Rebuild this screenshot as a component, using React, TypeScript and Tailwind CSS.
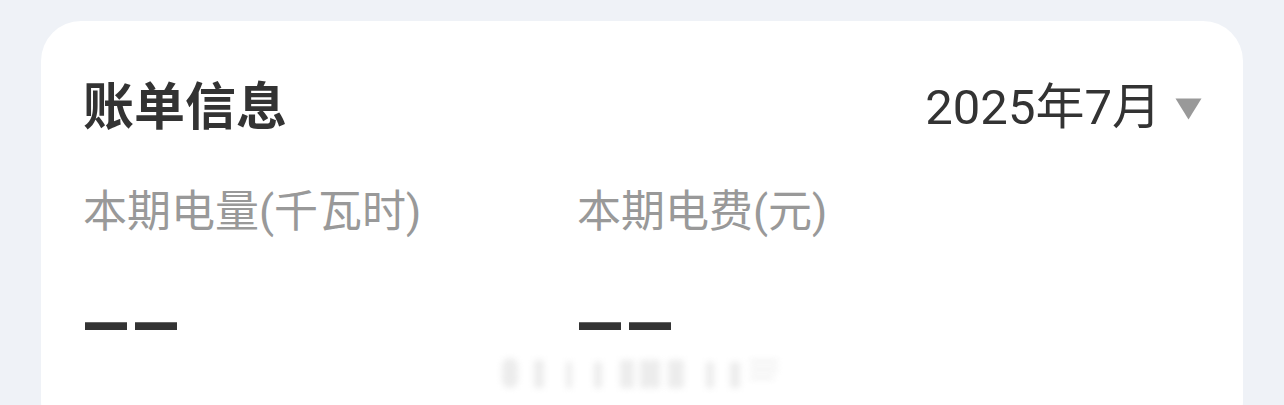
const FONT = "font-['Roboto','Noto_Sans_CJK_SC',sans-serif]"

const stats = [
  { label: '本期电量(千瓦时)', value: '——' },
  { label: '本期电费(元)', value: '——' },
]

function Caret() {
  return (
    <svg width="27" height="22" viewBox="0 0 27 22" className="ml-[14px] mt-[4px]">
      <path d="M0.5 0.5 H26.5 L13.5 21.5 Z" fill="#999999" />
    </svg>
  )
}

// faint smudge that sits under the value row
function Smudge() {
  return (
    <svg
      width="300"
      height="48"
      viewBox="0 0 300 48"
      className="pointer-events-none absolute left-[494px] top-[348px]"
    >
      <defs>
        <filter id="soft" x="-20%" y="-50%" width="140%" height="200%">
          <feGaussianBlur stdDeviation="3.4" />
        </filter>
      </defs>
      <g filter="url(#soft)" fill="#d0d0d0" opacity="0.4">
        <rect x="8" y="10" width="16" height="30" rx="8" />
        <rect x="40" y="12" width="10" height="28" />
        <rect x="72" y="14" width="6" height="26" />
        <rect x="100" y="14" width="8" height="26" />
        <rect x="126" y="12" width="14" height="28" />
        <rect x="146" y="12" width="20" height="28" />
        <rect x="174" y="12" width="16" height="28" />
        <rect x="212" y="14" width="8" height="26" />
        <rect x="236" y="14" width="10" height="26" />
        <rect x="256" y="12" width="28" height="3" />
        <rect x="256" y="20" width="28" height="3" />
        <rect x="256" y="28" width="24" height="3" />
      </g>
    </svg>
  )
}

export default function App() {
  return (
    <main className={`relative h-[405px] w-[1284px] overflow-hidden bg-[#eff2f7] px-[41px] pt-[21px] ${FONT}`}>
      <section className="h-[420px] rounded-[40px] bg-white pl-[42px] pr-[41px] pt-[58px]">
        <header className="flex h-[56px] items-center justify-between">
          <h1 className="text-[51px] font-bold leading-none text-[#333333]">账单信息</h1>
          <button className="flex items-center text-[49px] leading-none text-[#333333]">
            2025年7月
            <Caret />
          </button>
        </header>

        <div className="mt-[55px] grid grid-cols-[494px_1fr]">
          {stats.map((s) => (
            <div key={s.label} className="flex flex-col">
              <span className="text-[44px] leading-[44px] text-[#999999]">{s.label}</span>
              <span className="ml-[2px] mt-[63px] h-[40px] font-['Liberation_Sans',sans-serif] text-[42px] leading-[40px] text-[#333333]">
                <span className="inline-block origin-center scale-y-[2.8] tracking-[8px]">{s.value}</span>
              </span>
            </div>
          ))}
        </div>
      </section>
      <Smudge />
    </main>
  )
}
